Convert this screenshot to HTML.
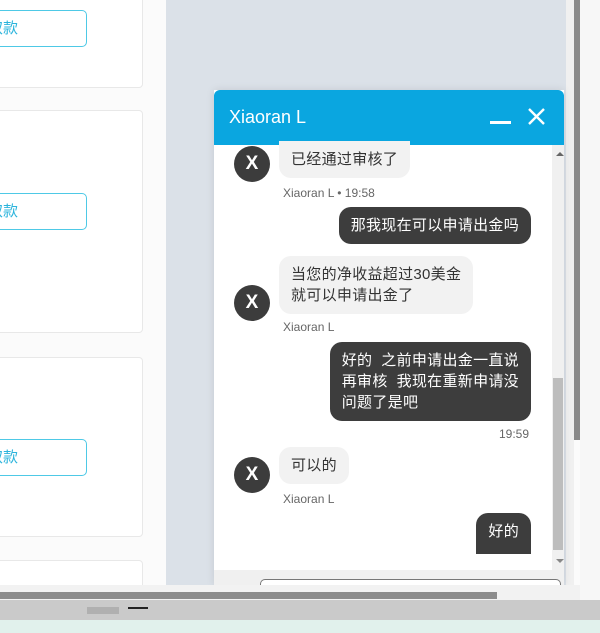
<!DOCTYPE html><html><head><meta charset="utf-8"><style>
*{margin:0;padding:0;box-sizing:border-box}
body{width:600px;height:633px;overflow:hidden;position:relative;background:#fbfbfb;font-family:"Liberation Sans","Noto Sans CJK SC",sans-serif}
.a{position:absolute}
.card{position:absolute;left:-10px;width:153px;background:#fff;border:1px solid #e8e8e8;border-radius:4px}
.btn{position:absolute;left:-10px;width:97px;height:37px;border:1px solid #4ec9e6;border-radius:5px;color:#2bb4dc;font-size:15px;line-height:35px;padding-left:0;text-indent:-3px;background:#fff;overflow:hidden;white-space:nowrap}
.bub{position:absolute;font-size:15px;line-height:21px;padding:8px 12px;border-radius:12px;white-space:nowrap;letter-spacing:.3px}
.in{background:#f2f2f2;color:#333}
.out{background:#3d3d3d;color:#fff;right:69px}
.av{position:absolute;left:234px;width:36px;height:36px;border-radius:50%;background:#3c3c3c;color:#fff;font-size:19px;text-align:center;line-height:36px;font-weight:bold}
.nm{position:absolute;font-size:12px;color:#666}
</style></head><body>
<div class="card" style="top:-10px;height:98px"></div>
<div class="card" style="top:110px;height:223px"></div>
<div class="card" style="top:357px;height:180px"></div>
<div class="card" style="top:560px;height:60px"></div>
<div class="btn" style="top:10px">取款</div>
<div class="btn" style="top:193px">取款</div>
<div class="btn" style="top:439px">取款</div>
<div class="a" style="left:166px;top:0;width:400px;height:585px;background:#dbe1e8"></div>
<div class="a" style="left:566px;top:0;width:8px;height:585px;background:#f0f0f0"></div>
<div class="a" style="left:574px;top:0;width:6px;height:440px;background:#8a8a8a"></div>
<div class="a" style="left:580px;top:0;width:20px;height:600px;background:#f7f7f7"></div>
<div class="a" style="left:214px;top:90px;width:350px;height:495px;background:#fff;box-shadow:0 0 8px rgba(0,0,0,.1)"></div>
<div class="a" style="left:214px;top:90px;width:350px;height:55px;background:#0aa6e0;border-radius:6px 6px 0 0;color:#fff;font-size:18px;line-height:55px;padding-left:15px">Xiaoran L</div>
<div class="a" style="left:490px;top:121px;width:21px;height:3px;background:#fff"></div>
<svg class="a" style="left:528px;top:108px" width="17" height="17"><path d="M1 1L16 16M16 1L1 16" stroke="#fff" stroke-width="2.4"/></svg>
<div class="a" style="left:552px;top:145px;width:12px;height:425px;background:#f0f0f0"></div>
<div class="a" style="left:553px;top:378px;width:10px;height:172px;background:#bdbdbd"></div>
<div class="a" style="left:556px;top:152px;border:4px solid transparent;border-bottom-color:#666;border-top:0"></div>
<div class="a" style="left:556px;top:559px;border:4px solid transparent;border-top-color:#888;border-bottom:0"></div>
<div class="av" style="top:146px">X</div>
<div class="bub in" style="left:279px;top:141px;border-radius:0 0 12px 12px">已经通过审核了</div>
<div class="nm" style="left:283px;top:186px">Xiaoran L • 19:58</div>
<div class="bub out" style="top:207px">那我现在可以申请出金吗</div>
<div class="av" style="top:285px">X</div>
<div class="bub in" style="left:279px;top:256px">当您的净收益超过30美金<br>就可以申请出金了</div>
<div class="nm" style="left:283px;top:320px">Xiaoran L</div>
<div class="bub out" style="top:342px">好的&nbsp; 之前申请出金一直说<br>再审核&nbsp; 我现在重新申请没<br>问题了是吧</div>
<div class="nm" style="left:499px;top:427px">19:59</div>
<div class="av" style="top:457px">X</div>
<div class="bub in" style="left:279px;top:447px">可以的</div>
<div class="nm" style="left:283px;top:492px">Xiaoran L</div>
<div class="bub out" style="top:513px;border-radius:12px 12px 0 0;padding-bottom:12px">好的</div>
<div class="a" style="left:214px;top:570px;width:350px;height:15px;background:#f0f0f0"></div>
<div class="a" style="left:260px;top:579px;width:301px;height:10px;border:1px solid #777;border-bottom:0;border-radius:5px 5px 0 0;background:#fff"></div>
<div class="a" style="left:0;top:585px;width:580px;height:15px;background:#f2f2f2"></div>
<div class="a" style="left:0;top:592px;width:497px;height:7px;background:#8c8c8c"></div>
<div class="a" style="left:0;top:600px;width:600px;height:20px;background:#cacaca"></div>
<div class="a" style="left:87px;top:607px;width:32px;height:7px;background:#b0b0b0"></div>
<div class="a" style="left:128px;top:607px;width:20px;height:2px;background:#222"></div>
<div class="a" style="left:0;top:620px;width:600px;height:13px;background:#e1f1ec"></div>
</body></html>
